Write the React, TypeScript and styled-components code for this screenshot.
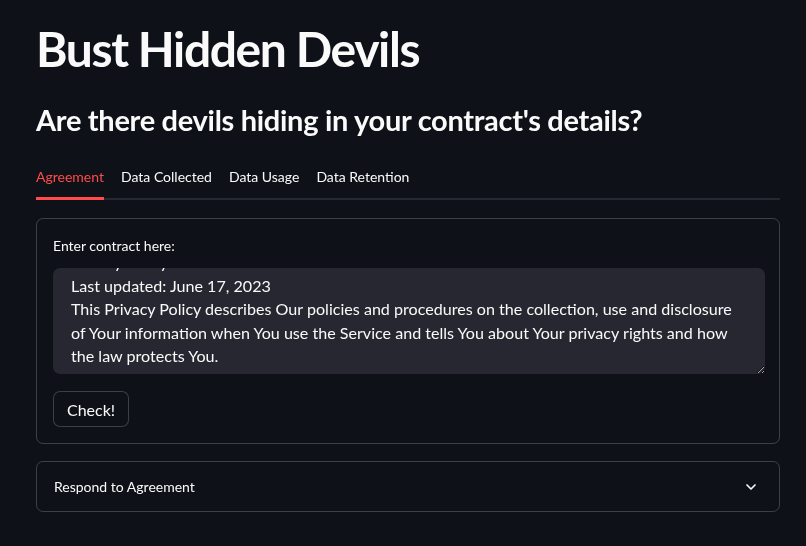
import React, { useLayoutEffect, useRef, useState } from 'react';
import styled, { createGlobalStyle } from 'styled-components';
import { ChevronDown } from 'lucide-react';

const GlobalStyle = createGlobalStyle`
  html, body {
    margin: 0;
    background: #0e1117;
    color: #fafafa;
    font-family: 'Lato', 'Noto Sans', sans-serif;
  }
`;

const Main = styled.main`
  padding: 20px 26px 0 36px;
`;

const Title = styled.h1`
  margin: 0;
  font-size: 48px;
  font-weight: 700;
  line-height: 1.2;
  letter-spacing: -1.4px;
`;

const Subtitle = styled.h2`
  margin: 25px 0 0;
  font-size: 29px;
  font-weight: 700;
  line-height: 1.2;
  letter-spacing: -0.3px;
`;

const TabList = styled.div`
  display: flex;
  gap: 17px;
  margin-top: 31px;
  border-bottom: 2px solid #262730;
`;

const Tab = styled.button<{ $active?: boolean }>`
  background: none;
  border: none;
  padding: 0 0 12px;
  margin-bottom: -2px;
  font-family: inherit;
  font-size: 14px;
  line-height: 17px;
  color: ${p => (p.$active ? '#ff4b4b' : '#fafafa')};
  border-bottom: 3px solid ${p => (p.$active ? '#ff4b4b' : 'transparent')};
  cursor: pointer;
`;

const Form = styled.div`
  margin-top: 18px;
  border: 1px solid rgba(250, 250, 250, 0.2);
  border-radius: 7px;
  padding: 17px 14px 16px 16px;
`;

const Label = styled.label`
  display: block;
  font-size: 14px;
  line-height: 20px;
`;

const TextArea = styled.textarea`
  display: block;
  box-sizing: border-box;
  width: 100%;
  height: 106px;
  margin-top: 12px;
  padding: 16px 16px 16px 18px;
  border: none;
  border-radius: 7px;
  background: #262730;
  color: #fafafa;
  font-family: inherit;
  font-size: 16.1px;
  line-height: 23.5px;
  resize: vertical;
  outline: none;
  scrollbar-width: none;
  &::-webkit-scrollbar {
    display: none;
  }
`;

const Button = styled.button`
  margin-top: 17px;
  height: 36px;
  padding: 0 13px;
  border: 1px solid rgba(250, 250, 250, 0.2);
  border-radius: 7px;
  background: #0e1117;
  color: #fafafa;
  font-family: inherit;
  font-size: 16px;
  cursor: pointer;
`;

const Expander = styled.div`
  margin-top: 17px;
  height: 51px;
  box-sizing: border-box;
  border: 1px solid rgba(250, 250, 250, 0.2);
  border-radius: 7px;
  padding: 0 20px 0 17px;
  display: flex;
  align-items: center;
  justify-content: space-between;
  font-size: 14px;
`;

const contract = `Privacy Policy
Last updated: June 17, 2023
This Privacy Policy describes Our policies and procedures on the collection, use and disclosure of Your information when You use the Service and tells You about Your privacy rights and how the law protects You.
We use Your Personal data to provide and improve the Service. By using the Service, You agree to the collection and use of information in accordance with this Privacy Policy.`;

const tabs = ['Agreement', 'Data Collected', 'Data Usage', 'Data Retention'];

export default function App() {
  const [active, setActive] = useState(0);
  const ref = useRef<HTMLTextAreaElement>(null);

  useLayoutEffect(() => {
    if (ref.current) ref.current.scrollTop = 34;
  }, []);

  return (
    <>
      <GlobalStyle />
      <Main>
        <Title>Bust Hidden Devils</Title>
        <Subtitle>Are there devils hiding in your contract's details?</Subtitle>
        <TabList>
          {tabs.map((t, i) => (
            <Tab key={t} $active={i === active} onClick={() => setActive(i)}>
              {t}
            </Tab>
          ))}
        </TabList>
        <Form>
          <Label>Enter contract here:</Label>
          <TextArea ref={ref} defaultValue={contract} />
          <Button>Check!</Button>
        </Form>
        <Expander>
          <span>Respond to Agreement</span>
          <ChevronDown size={16} strokeWidth={2.5} />
        </Expander>
      </Main>
    </>
  );
}
